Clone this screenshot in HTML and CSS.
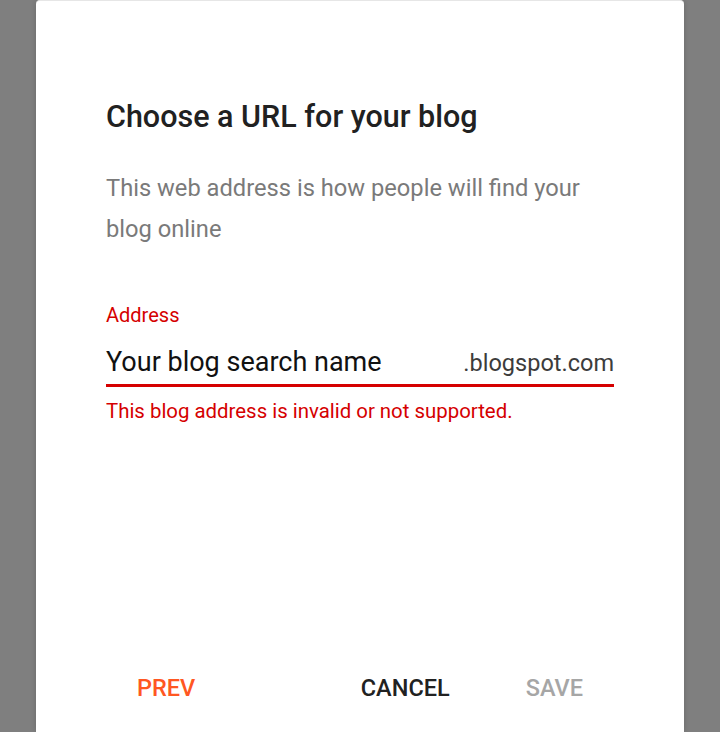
FILE: index.html
```html
<!DOCTYPE html>
<html>
<head>
<meta charset="utf-8">
<link rel="stylesheet" href="styles.css">
</head>
<body>
<div class="dialog">
  <div class="content">
    <h1 class="title">Choose a URL for your blog</h1>
    <p class="subtitle">This web address is how people will find your blog online</p>
    <div class="field">
      <label class="label">Address</label>
      <div class="input-row">
        <span class="input-text">Your blog search name</span>
        <span class="suffix">.blogspot.com</span>
      </div>
      <div class="error">This blog address is invalid or not supported.</div>
    </div>
  </div>
  <div class="actions">
    <span class="btn btn-prev">PREV</span>
    <span class="btn btn-cancel">CANCEL</span>
    <span class="btn btn-save">SAVE</span>
  </div>
</div>
</body>
</html>
```
FILE: styles.css
```css
html, body {
  margin: 0;
  height: 100%;
}
body {
  background: #7f7f7f;
  font-family: Roboto, "Noto Sans", sans-serif;
  overflow: hidden;
}
.dialog {
  margin-left: 36px;
  width: 648px;
  height: 732px;
  background: #fff;
  border-top: 1px solid #e6e6e6;
  border-radius: 4px 4px 0 0;
  box-sizing: border-box;
  box-shadow: 0 0 6px rgba(0,0,0,0.18);
  display: flex;
  flex-direction: column;
}
.content {
  flex: 1;
  padding: 0 70px;
}
.title {
  margin: 96px 0 0;
  font-size: 30.5px;
  font-weight: 500;
  color: #212121;
  line-height: 40px;
}
.subtitle {
  margin: 31px 0 0;
  font-size: 23.7px;
  line-height: 41px;
  color: #7a7a7a;
}
.field {
  margin-top: 53px;
}
.label {
  display: block;
  font-size: 20px;
  line-height: 24px;
  color: #d50000;
}
.input-row {
  display: flex;
  justify-content: space-between;
  align-items: baseline;
  margin-top: 19px;
  padding-bottom: 6px;
  border-bottom: 3px solid #d50000;
}
.input-text {
  font-size: 27px;
  color: #111;
}
.suffix {
  font-size: 23.5px;
  color: #3c3c3c;
}
.error {
  margin-top: 12px;
  font-size: 20.4px;
  color: #d50000;
}
.actions {
  display: flex;
  align-items: center;
  padding: 0 101px 19px;
  height: 50px;
}
.btn {
  font-size: 23.5px;
  font-weight: 500;
}
.btn-prev {
  color: #ff5722;
}
.btn-cancel {
  color: #212121;
  margin-left: auto;
}
.btn-save {
  color: #a6a6a6;
  margin-left: 76px;
}
```
